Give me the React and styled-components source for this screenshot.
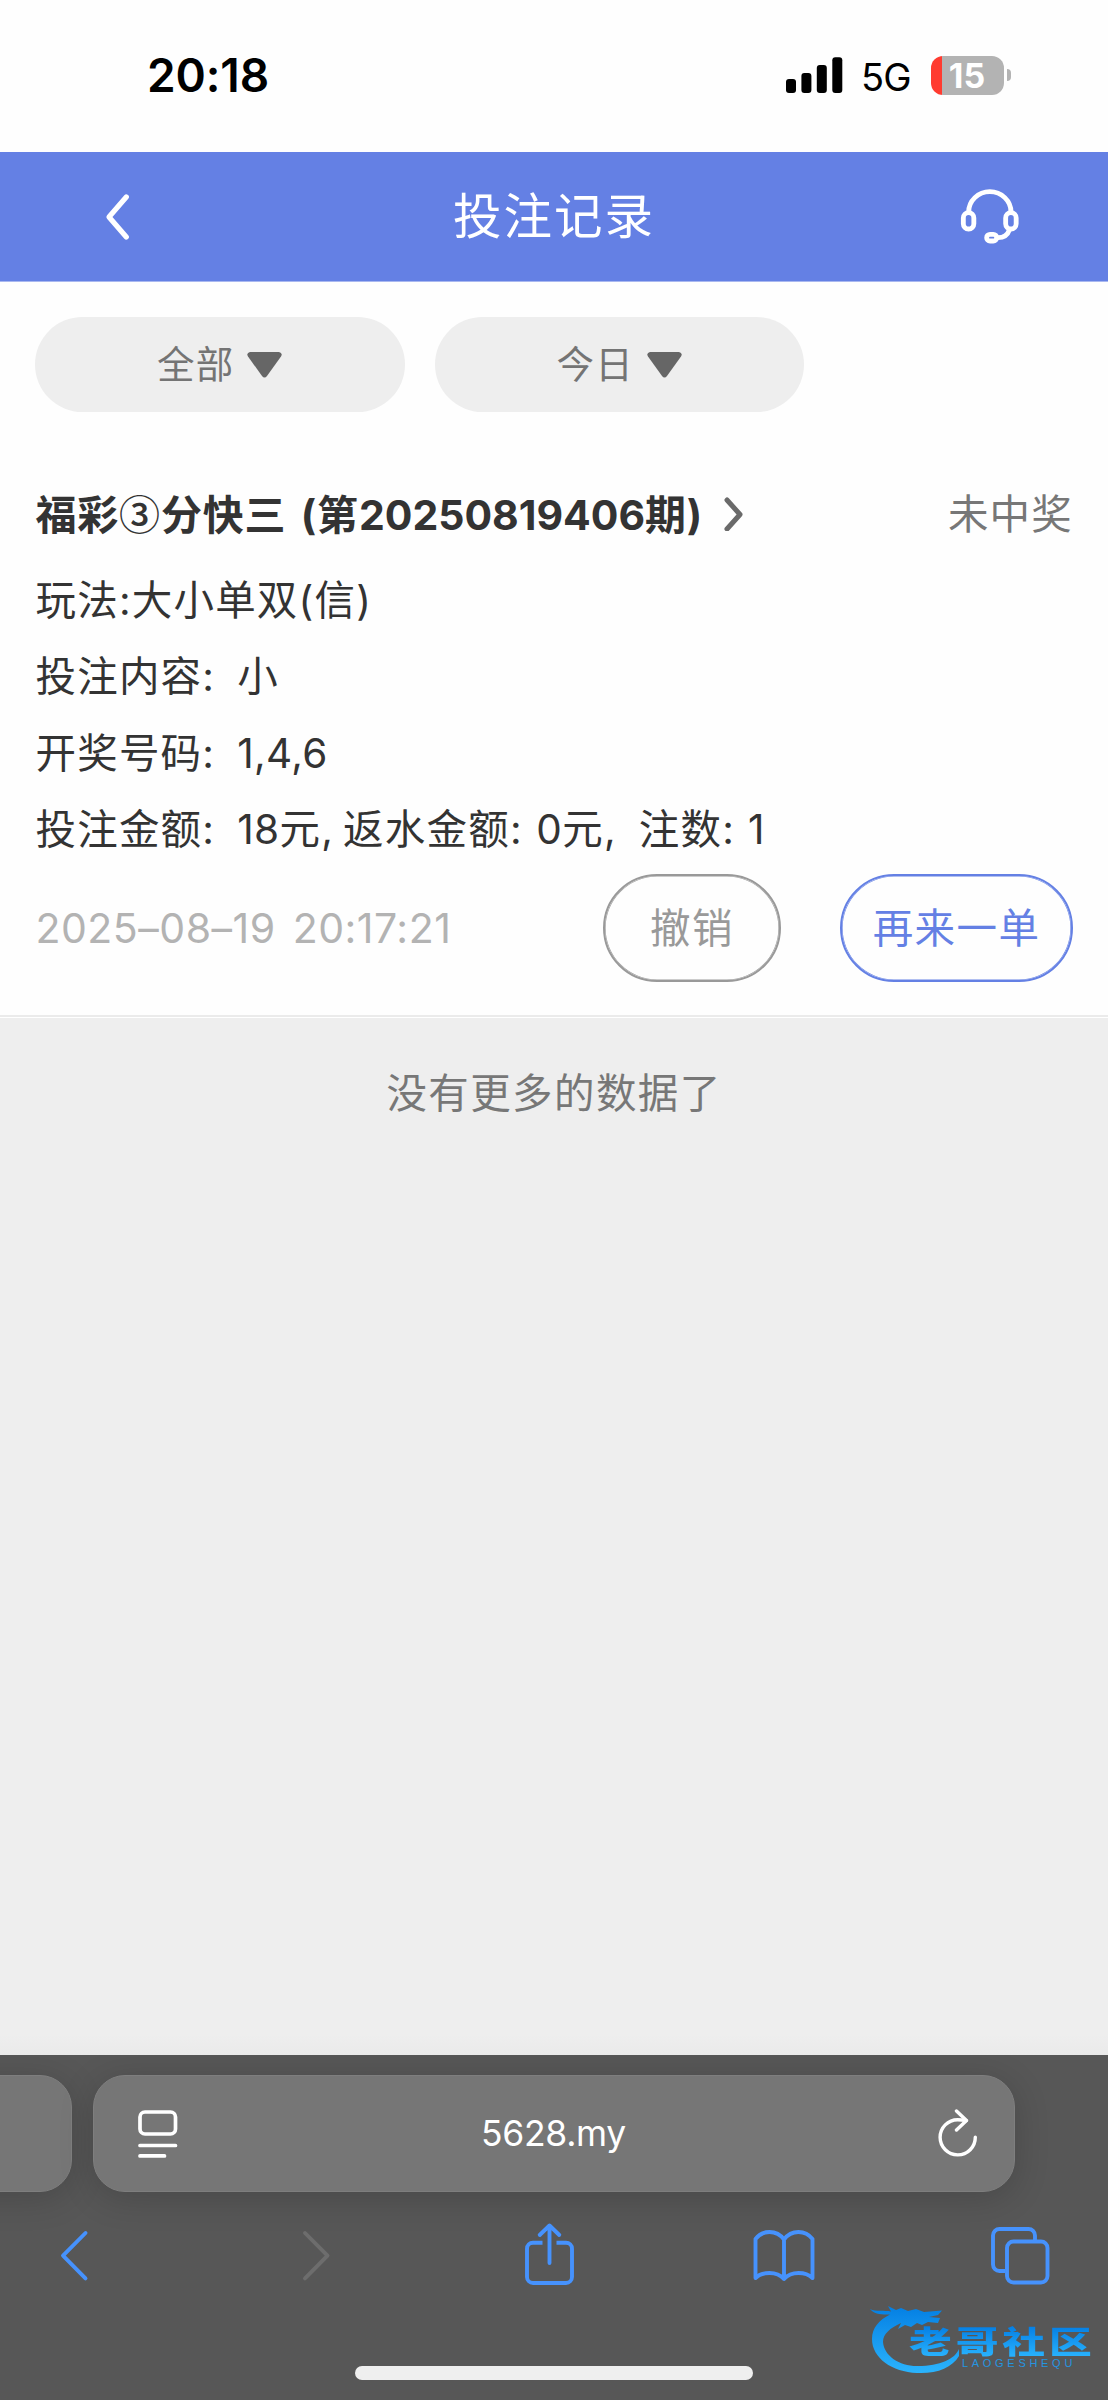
import React from 'react';
import styled, { createGlobalStyle } from 'styled-components';

const Global = createGlobalStyle`
  * { box-sizing: border-box; }
  html, body { margin: 0; padding: 0; background: #eeeeee; }
  body { font-family: Inter, "Noto Sans CJK SC", sans-serif; }
  svg { display: block; flex: none; }
  button { font: inherit; margin: 0; padding: 0; border: 0; background: none; color: inherit; }
`;

const Screen = styled.div`
  width: 1108px;
  height: 2400px;
  display: flex;
  flex-direction: column;
  overflow: hidden;
  background: #eeeeee;
`;

const StatusBar = styled.div`
  height: 152px;
  flex: none;
  display: flex;
  align-items: center;
  padding: 0 97px 2px 147px;
  background: #fefefe;
  color: #000;
`;
const Clock = styled.div`
  flex: 1;
  font-size: 46px;
  font-weight: 600;
  line-height: 56px;
  letter-spacing: -0.1px;
`;
const Network = styled.div`
  margin: 3px 20px 0 18px;
  width: 50px;
  white-space: nowrap;
  font-size: 38px;
  line-height: 44px;
  letter-spacing: -0.8px;
`;
const Battery = styled.div`
  display: flex;
  align-items: center;
`;
const BatteryBody = styled.div`
  width: 73px;
  height: 39px;
  border-radius: 12px;
  background: linear-gradient(to right, #ff3b30 11px, #b3b3b3 11px);
  color: #fff;
  font-size: 34px;
  font-weight: 700;
  line-height: 39px;
  text-align: center;
  padding-right: 1px;
`;
const BatteryTip = styled.div`
  width: 4px;
  height: 12px;
  margin-left: 3px;
  border-radius: 0 4px 4px 0;
  background: #b3b3b3;
`;

const Header = styled.header`
  height: 130px;
  flex: none;
  display: grid;
  grid-template-columns: 240px 1fr 240px;
  align-items: center;
  background: #6480e4;
  border-bottom: 1px solid #a9b8f0;
  color: #fff;
`;
const HeaderTitle = styled.h1`
  margin: 0;
  text-align: center;
  font-size: 48.5px;
  font-weight: 400;
  line-height: 60px;
  letter-spacing: 2px;
`;
const HeaderIcon = styled.button`
  display: flex;
  justify-content: ${(p) => (p.$end ? 'flex-end' : 'flex-start')};
  padding: ${(p) => (p.$end ? '0 88px 0 0' : '0 0 0 104px')};
`;

const Content = styled.main`
  flex: none;
  height: 733px;
  background: #fefefe;
  display: flex;
  flex-direction: column;
`;
const Filters = styled.div`
  display: flex;
  gap: 30px;
  padding: 35px 35px 0;
`;
const FilterPill = styled.button`
  width: 369.5px;
  height: 95px;
  border-radius: 48px;
  background: #eeeeee;
  color: #747474;
  display: flex;
  align-items: center;
  justify-content: center;
  gap: 13px;
  font-size: 37.5px;
  letter-spacing: 1.2px;
  line-height: 50px;
`;

const Record = styled.section`
  padding: 70px 35px 0 35.5px;
  color: #333;
  font-size: 40.5px;
  letter-spacing: 1.2px;
`;
const RecordHead = styled.div`
  display: flex;
  align-items: center;
  height: 62px;
  margin-bottom: 18px;
`;
const RecordTitle = styled.h2`
  margin: 0 21px 0 0;
  font-size: 41px;
  font-weight: 700;
  letter-spacing: 0.8px;
  line-height: 60px;
  white-space: nowrap;
`;
const Circled = styled.span`
  font-family: "Noto Sans CJK SC", sans-serif;
  font-weight: 500;
`;
const Issue = styled.span`
  margin-left: 4px;
`;
const IssueNumber = styled.span`
  letter-spacing: 0;
`;
const Status = styled.span`
  margin: 3px 0 0 auto;
  color: #777;
  line-height: 60px;
`;
const Line = styled.div`
  height: 76.4px;
  line-height: 77px;
  white-space: nowrap;
`;
const Part = styled.span`
  margin-left: ${(p) => p.$gap || 0}px;
`;
const Figure = styled.span`
  letter-spacing: 0.4px;
`;
const RecordFoot = styled.div`
  display: flex;
  align-items: center;
  margin-top: 6px;
  height: 108px;
`;
const Stamp = styled.time`
  flex: 1;
  color: #b3b3b3;
  font-size: 41px;
  letter-spacing: 0.5px;
  word-spacing: 5px;
  white-space: nowrap;
`;
const ActionButton = styled.button`
  width: ${(p) => p.$width}px;
  height: 108px;
  margin-left: ${(p) => p.$gap || 0}px;
  padding-top: 2px;
  border: 2px solid ${(p) => p.$color};
  box-shadow: inset 0 0 0 0.6px ${(p) => p.$color};
  border-radius: 54px;
  color: ${(p) => p.$color};
  letter-spacing: 1.4px;
  line-height: 60px;
`;
const Hairline = styled.div`
  height: 3px;
  flex: none;
  background: #fff;
  border-top: 2px solid #ebebeb;
`;
const ListEnd = styled.div`
  flex: 1;
  padding-top: 46px;
  text-align: center;
  color: #777;
  font-size: 40.5px;
  line-height: 60px;
  letter-spacing: 1.4px;
  background: linear-gradient(to bottom, #eeeeee 98%, #eaeaea);
`;

const BrowserBar = styled.footer`
  position: relative;
  height: 345px;
  flex: none;
  background: #575757;
  display: flex;
  flex-direction: column;
  overflow: hidden;
`;
const TabStrip = styled.div`
  display: flex;
  gap: 21px;
  padding-top: 20px;
  margin-left: -60px;
`;
const Tab = styled.div`
  width: ${(p) => p.$width}px;
  height: 117px;
  flex: none;
  display: flex;
  align-items: center;
  padding: 0 36px 0 44px;
  border: 1px solid #7e7e7e;
  border-radius: 32px;
  background: #767676;
  color: #fff;
  box-shadow: 0 6px 34px rgba(0, 0, 0, 0.17);
`;
const Address = styled.div`
  flex: 1;
  padding-right: 9px;
  text-align: center;
  font-size: 35.5px;
  line-height: 44px;
  letter-spacing: -0.3px;
`;
const Toolbar = styled.nav`
  display: flex;
  align-items: center;
  height: 64px;
  margin-top: 30px;
  padding-left: 59px;
`;
const ToolButton = styled.button`
  display: flex;
  margin-left: ${(p) => p.$gap || 0}px;
`;
const HomeIndicator = styled.div`
  width: 398px;
  height: 14px;
  margin: 80px auto 0;
  border-radius: 7px;
  background: #efefef;
`;

const Watermark = styled.div`
  position: absolute;
  right: 14px;
  bottom: 22px;
  width: 226px;
  height: 82px;
`;
const WatermarkName = styled.div`
  position: absolute;
  left: 41px;
  top: 27px;
  font-family: "Noto Sans CJK SC", sans-serif;
  font-size: 31px;
  font-weight: 900;
  line-height: 34px;
  letter-spacing: 2.8px;
  white-space: nowrap;
  transform: scaleX(1.38);
  transform-origin: left;
  color: transparent;
  background: linear-gradient(to bottom, #057fe4 10%, #27b0fc 95%);
  background-clip: text;
  -webkit-background-clip: text;
`;
const WatermarkLatin = styled.div`
  position: absolute;
  left: 94px;
  top: 61px;
  font-family: "Liberation Sans", sans-serif;
  font-size: 11px;
  line-height: 12px;
  letter-spacing: 3.7px;
  color: #2595e0;
  white-space: nowrap;
`;

const Signal = () => (
  <svg width="57" height="38" viewBox="0 0 57 38">
    <rect x="0" y="23" width="10" height="14" rx="3" />
    <rect x="15.4" y="17" width="10" height="20" rx="3" />
    <rect x="30.8" y="9" width="10" height="28" rx="3" />
    <rect x="46.3" y="1.3" width="10" height="35.7" rx="3" />
  </svg>
);

const BackIcon = () => (
  <svg width="28" height="48" viewBox="0 0 28 48" fill="none" stroke="#fff" strokeWidth="5.2" strokeLinecap="round" strokeLinejoin="round">
    <path d="M22.300 4 5 24l17.300 20" />
  </svg>
);

const Headset = () => (
  <svg width="60" height="57" viewBox="660 504 180 171" fill="none" stroke="#fff" strokeWidth="14.500" strokeLinecap="round">
    <path d="M686 578v-2a63.500 61 0 0 1 127 0v2" />
    <rect x="670" y="578" width="31.500" height="49" rx="15.700" />
    <rect x="797" y="578" width="31.500" height="49" rx="15.700" />
    <path d="M808 630c-5 15-15 23-34 23" />
    <rect x="740" y="643" width="30" height="20" rx="10" />
  </svg>
);

const Caret = () => (
  <svg width="35" height="26" viewBox="0 0 35 26">
    <path d="M3 0h29q4 1 2 4.500L20 24q-2.500 3-5 0L1 4.500Q-1 1 3 0z" fill="#666" />
  </svg>
);

const RecordArrow = () => (
  <svg width="20" height="36" viewBox="0 0 20 34" fill="none" stroke="#6a6a6a" strokeWidth="5" strokeLinejoin="round" strokeLinecap="round">
    <path d="M3 4l13 14.500L3 33" />
  </svg>
);

const PageIcon = () => (
  <svg width="40" height="48" viewBox="0 0 40 48" fill="none" stroke="#fff" strokeWidth="3.700" strokeLinecap="round">
    <rect x="2" y="2" width="35.500" height="22" rx="5" />
    <path d="M2 35.500h35.500M2 45.900h24.500" />
  </svg>
);

const ReloadIcon = () => (
  <svg width="40" height="50" viewBox="0 0 40 50" fill="none" stroke="#fff" strokeWidth="3.400" strokeLinecap="round" strokeLinejoin="round">
    <path d="M37.300 28.200A17.600 17.600 0 1 1 19.700 10.700q4 0 8.500.9" />
    <path d="M18.500 2l10 9.500-10 9.500" />
  </svg>
);

const ToolSvg = ({ w, children, color = '#4692fd' }) => (
  <svg width={w} height="64" viewBox={`0 0 ${w} 64`} fill="none" stroke={color} strokeWidth="3.900" strokeLinecap="round" strokeLinejoin="round">
    {children}
  </svg>
);

const Dragon = () => (
  <svg width="226" height="82" viewBox="0 0 226 82">
    <defs>
      <linearGradient id="dragon" x1="0" y1="0" x2="0" y2="1">
        <stop offset="0" stopColor="#047fe3" />
        <stop offset="1" stopColor="#2bb4fd" />
      </linearGradient>
    </defs>
    <path
      fill="url(#dragon)"
      d="M2 13C8 16 16 14 23 15.500L20 10l8 4 5-2 7 3 8-2 8 3 18-1.500-4 4.500-9 2 11 1-2 5-10-1-6 3-5-2-6 4-6-2-7 4 3-6C22 32 15 38 15 46c1 14 17 24.500 35 24 22 0 37-7 41-17v7C84 72 68 78 49 77 24 76 4 62 4 43 4 32 11 24 22 18.500 14 19 6 18 2 13z"
    />
  </svg>
);

export default function App() {
  return (
    <Screen>
      <Global />
      <StatusBar>
        <Clock>20:18</Clock>
        <Signal />
        <Network>5G</Network>
        <Battery>
          <BatteryBody>15</BatteryBody>
          <BatteryTip />
        </Battery>
      </StatusBar>

      <Header>
        <HeaderIcon aria-label="返回"><BackIcon /></HeaderIcon>
        <HeaderTitle>投注记录</HeaderTitle>
        <HeaderIcon $end aria-label="客服"><Headset /></HeaderIcon>
      </Header>

      <Content>
        <Filters>
          <FilterPill>全部<Caret /></FilterPill>
          <FilterPill>今日<Caret /></FilterPill>
        </Filters>

        <Record>
          <RecordHead>
            <RecordTitle>
              福彩<Circled>③</Circled>分快三 <Issue>(第<IssueNumber>20250819406</IssueNumber>期)</Issue>
            </RecordTitle>
            <RecordArrow />
            <Status>未中奖</Status>
          </RecordHead>
          <Line>玩法:大小单双(信)</Line>
          <Line>投注内容:<Part $gap={22}>小</Part></Line>
          <Line>开奖号码:<Part $gap={22}><Figure>1,4,6</Figure></Part></Line>
          <Line>
            投注金额:<Part $gap={22}><Figure>18</Figure>元,</Part>
            <Part $gap={9}>返水金额:</Part>
            <Part $gap={13.5}><Figure>0</Figure>元,</Part>
            <Part $gap={22}>注数:</Part>
            <Part $gap={13}><Figure>1</Figure></Part>
          </Line>
          <RecordFoot>
            <Stamp>2025–08–19 20:17:21</Stamp>
            <ActionButton $width={178} $color="#999">撤销</ActionButton>
            <ActionButton $width={233} $gap={59} $color="#6480e4">再来一单</ActionButton>
          </RecordFoot>
        </Record>
      </Content>
      <Hairline />
      <ListEnd>没有更多的数据了</ListEnd>

      <BrowserBar>
        <TabStrip>
          <Tab $width={132} />
          <Tab $width={922}>
            <PageIcon />
            <Address>5628.my</Address>
            <ReloadIcon />
          </Tab>
        </TabStrip>
        <Toolbar>
          <ToolButton aria-label="后退">
            <ToolSvg w={31}><path d="M26.500 11 4 33.700l22.500 22.700" /></ToolSvg>
          </ToolButton>
          <ToolButton $gap={211} aria-label="前进">
            <ToolSvg w={31} color="#6d6d6d"><path d="M4 11l22.500 22.700L4 56.400" /></ToolSvg>
          </ToolButton>
          <ToolButton $gap={191.5} aria-label="分享">
            <ToolSvg w={51}>
              <path d="M18.500 20.700H9a6 6 0 0 0-6 6V55a6 6 0 0 0 6 6h33a6 6 0 0 0 6-6V26.700a6 6 0 0 0-6-6h-9.500" strokeLinecap="butt" />
              <path d="M25.500 41V4M15.700 13l9.800-9.500 9.800 9.500" />
            </ToolSvg>
          </ToolButton>
          <ToolButton $gap={177} aria-label="书签">
            <ToolSvg w={64}>
              <path d="M32 17.500C28 12 23 10 17.500 10 12 10 7 12.500 3.500 17v39C7 52.500 12 51 17.500 51 23 51 28 52.500 32 57c4-4.500 9-6 14.500-6S57 52.500 60.500 56V17C57 12.500 52 10 46.500 10S36 12 32 17.500zM32 17.500V57" />
            </ToolSvg>
          </ToolButton>
          <ToolButton $gap={174} aria-label="标签页">
            <ToolSvg w={60}>
              <path d="M15 49H9.500a6.500 6.500 0 0 1-6.500-6.500V13.500A6.500 6.500 0 0 1 9.500 7h29a6.500 6.500 0 0 1 6.500 6.500V19" strokeLinecap="butt" />
              <rect x="17" y="19.500" width="40.500" height="41" rx="6.500" />
            </ToolSvg>
          </ToolButton>
        </Toolbar>
        <HomeIndicator />
        <Watermark>
          <Dragon />
          <WatermarkName>老哥社区</WatermarkName>
          <WatermarkLatin>LAOGESHEQU</WatermarkLatin>
        </Watermark>
      </BrowserBar>
    </Screen>
  );
}
